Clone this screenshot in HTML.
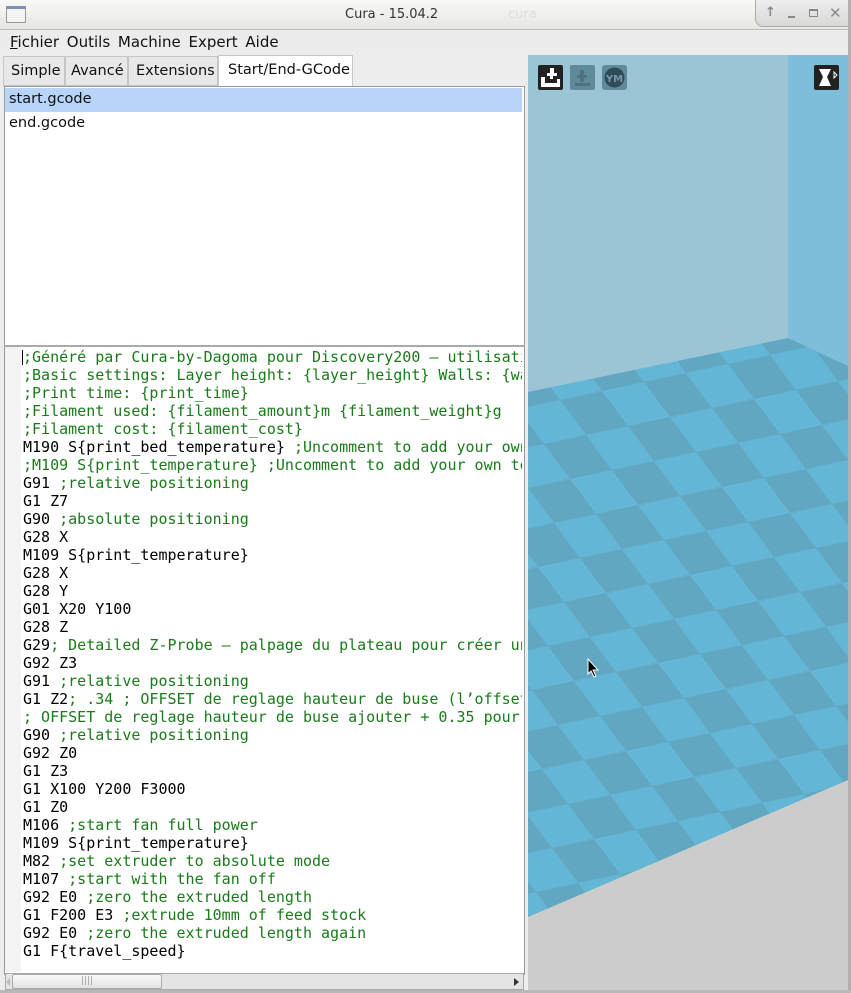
<!DOCTYPE html>
<html><head><meta charset="utf-8"><style>
*{margin:0;padding:0;box-sizing:border-box}
body{width:851px;height:993px;overflow:hidden;background:#ededed;font-family:"DejaVu Sans","Liberation Sans",sans-serif;font-size:14px;color:#111;position:relative}
.abs{position:absolute}
#title{left:0;top:0;width:851px;height:30px;background:linear-gradient(#f8f8f6,#e6e6e2);border-bottom:1px solid #bdbdb8}
#menu{left:0;top:30px;width:851px;height:25px;background:#ececec}
.code{font-family:"DejaVu Sans Mono","Liberation Mono",monospace;font-size:15px;line-height:18px;white-space:pre;color:#000}
.c{color:#1a7a1a}
.wb{position:absolute;top:5px;color:#888;font-size:13px}
</style></head><body>
<div id="title" class="abs">
 <div class="abs" style="left:6px;top:6px;width:20px;height:17px;border:1px solid #999;background:#f4f4f4;border-top:3px solid #7a8fb3"></div>
 <div class="abs" style="left:345px;top:7px;font-size:13px;color:#333">Cura - 15.04.2</div>
 <div class="abs" style="left:508px;top:7px;font-size:13px;color:#ddd">cura</div>
 <div class="abs" style="left:755px;top:0;width:96px;height:27px;background:linear-gradient(#eee,#d8d8d8);border:1px solid #aaa;border-top:none;border-radius:0 0 0 8px">
  <span class="wb" style="left:9px;font-weight:bold">↑</span>
  <span class="abs" style="left:32px;top:16px;width:7px;height:2px;background:#888"></span>
  <span class="abs" style="left:53px;top:9px;width:9px;height:8px;border:1px solid #888;border-top-width:2px"></span>
  <span class="wb" style="left:73px;top:4px;font-size:15px">✕</span>
 </div>
</div>
<div id="menu" class="abs"><div class="abs" style="left:10px;top:3px;font-size:15px;word-spacing:3px"><u>F</u>ichier Outils Machine Expert Aide</div></div>
<!-- tabs -->
<div class="abs" style="left:3px;top:56px;width:62px;height:30px;border:1px solid #c6c6c6;background:#e8e8e8;padding:6px 0 0 7px;font-size:14.5px">Simple</div>
<div class="abs" style="left:65px;top:56px;width:63px;height:30px;border:1px solid #c6c6c6;background:#e8e8e8;padding:6px 0 0 5px;font-size:14.5px">Avancé</div>
<div class="abs" style="left:128px;top:56px;width:90px;height:30px;border:1px solid #c6c6c6;background:#e8e8e8;padding:6px 0 0 7px;font-size:14.5px">Extensions</div>
<div class="abs" style="left:218px;top:55px;width:135px;height:31px;border:1px solid #c6c6c6;border-bottom:none;background:#fff;padding:6px 0 0 9px;font-size:14.5px">Start/End-GCode</div>
<!-- list -->
<div class="abs" style="left:4px;top:86px;width:521px;height:260px;background:#fff;border:1px solid #999"></div>
<div class="abs" style="left:5px;top:88px;width:517px;height:24px;background:#b8d4f8"></div>
<div class="abs" style="left:9px;top:91px;font-size:14.5px">start.gcode</div>
<div class="abs" style="left:9px;top:115px;font-size:14.5px">end.gcode</div>
<!-- editor -->
<div class="abs" style="left:4px;top:345px;width:521px;height:630px;background:#fff;border:1px solid #999;border-top:2px solid #aaa"></div>
<div class="abs" style="left:5px;top:347px;width:16px;height:625px;background:#f3f3f3"></div>
<div class="abs" style="left:22px;top:350px;width:1px;height:15px;background:#000"></div>
<div class="abs code" style="left:23px;top:348px;width:499px;overflow:hidden"><span class="c">;Généré par Cura-by-Dagoma pour Discovery200 — utilisation</span>
<span class="c">;Basic settings: Layer height: {layer_height} Walls: {wall}</span>
<span class="c">;Print time: {print_time}</span>
<span class="c">;Filament used: {filament_amount}m {filament_weight}g</span>
<span class="c">;Filament cost: {filament_cost}</span>
M190 S{print_bed_temperature} <span class="c">;Uncomment to add your own</span>
<span class="c">;M109 S{print_temperature} ;Uncomment to add your own temp</span>
G91 <span class="c">;relative positioning</span>
G1 Z7
G90 <span class="c">;absolute positioning</span>
G28 X
M109 S{print_temperature}
G28 X
G28 Y
G01 X20 Y100
G28 Z
G29<span class="c">; Detailed Z-Probe — palpage du plateau pour créer un</span>
G92 Z3
G91 <span class="c">;relative positioning</span>
G1 Z2<span class="c">; .34 ; OFFSET de reglage hauteur de buse (l’offset</span>
<span class="c">; OFFSET de reglage hauteur de buse ajouter + 0.35 pour</span>
G90 <span class="c">;relative positioning</span>
G92 Z0
G1 Z3
G1 X100 Y200 F3000
G1 Z0
M106 <span class="c">;start fan full power</span>
M109 S{print_temperature}
M82 <span class="c">;set extruder to absolute mode</span>
M107 <span class="c">;start with the fan off</span>
G92 E0 <span class="c">;zero the extruded length</span>
G1 F200 E3 <span class="c">;extrude 10mm of feed stock</span>
G92 E0 <span class="c">;zero the extruded length again</span>
G1 F{travel_speed}</div>
<!-- scrollbar -->
<div class="abs" style="left:5px;top:973px;width:519px;height:17px;background:#e4e4e4;border:1px solid #aaa"></div>
<div class="abs" style="left:12px;top:974px;width:150px;height:15px;background:linear-gradient(#fafafa,#e2e2e2);border:1px solid #aaa;border-radius:2px;color:#999;font-size:9px;text-align:center;line-height:13px">||||</div>
<div class="abs" style="left:514px;top:978px;border-left:5px solid #333;border-top:4px solid transparent;border-bottom:4px solid transparent"></div>
<div class="abs" style="left:6px;top:978px;border-right:4px solid #bbb;border-top:4px solid transparent;border-bottom:4px solid transparent"></div>
<!-- 3D view -->
<svg class="abs" style="left:528px;top:55px" width="320" height="938" viewBox="528 55 320 938">
 <defs>
  <pattern id="ck" patternUnits="userSpaceOnUse" width="2" height="2" patternTransform="matrix(42 -9 26 35 560 400)">
   <rect width="2" height="2" fill="#63b6d6"/>
   <rect width="1" height="1" fill="#62a7c1"/>
   <rect x="1" y="1" width="1" height="1" fill="#62a7c1"/>
  </pattern>
 </defs>
 <rect x="528" y="55" width="320" height="938" fill="#cccccc"/>
 <rect x="528" y="55" width="320" height="340" fill="#9bc4d5"/>
 <polygon points="788,55 848,55 848,370 788,338" fill="#7fbedb"/>
 <polygon points="528,392 788,338 848,366 848,780 528,917" fill="url(#ck)"/>
 <g>
  <rect x="538" y="65" width="25" height="25" rx="2" fill="#222"/>
  <path d="M550 68h4v5h3v3h-4v3h-3v-3h-3v-3h3z M541 77h4v6h12v-4h3v8h-19z" fill="#fff"/>
  <rect x="570" y="65" width="25" height="25" rx="2" fill="#5f8a9a"/>
  <path d="M580 70h4v5h3v3h-3v4h-4v-4h-3v-3h3z M575 83h15v3h-15z" fill="#50707c"/>
  <rect x="602" y="65" width="25" height="25" rx="3" fill="#5f8a9a"/>
  <circle cx="614.5" cy="77.5" r="10" fill="#2e4b5a"/>
  <text x="614.5" y="82" font-size="10" font-family="DejaVu Sans" fill="#7a95a2" text-anchor="middle" font-weight="bold">YM</text>
  <rect x="814" y="65" width="25" height="25" rx="2" fill="#222"/>
  <path d="M819 69h12l-4 8 4 9h-12l4-9z" fill="#fff"/>
  <path d="M834 72l3 3-3 3z" fill="none" stroke="#fff" stroke-width="1"/>
 </g>
 <path d="M588 659v15l3-3 3 6 2-1-3-6h5z" fill="#000" stroke="#fff" stroke-width="1"/>
</svg>
<div class="abs" style="left:848px;top:0;width:3px;height:993px;background:#b0b0b0"></div>
<div class="abs" style="left:0;top:990px;width:851px;height:3px;background:#b8b8b8"></div>
</body></html>
